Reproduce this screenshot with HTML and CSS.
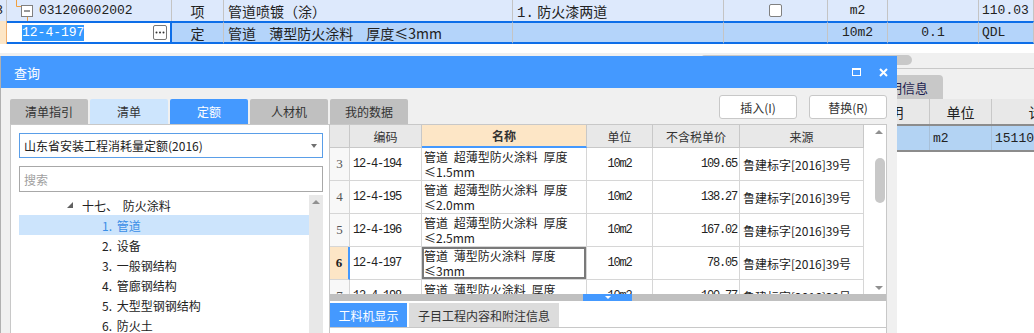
FILE: index.html
```html
<!DOCTYPE html>
<html lang="zh-CN">
<head>
    <meta charset="UTF-8">
    <meta name="viewport" content="width=device-width, initial-scale=1.0">
    <title>查询</title>
    <link rel="stylesheet" href="styles.css">
</head>
<body>
    <!-- 分部分项表格（对话框后面） -->
    <div class="sheet">
        <div class="sheet-row row-parent">
            <div class="cell c-num">3</div>
            <div class="cell c-code">
                <svg class="tree-line" width="26" height="21" viewBox="0 0 26 21">
                    <path d="M9.5 0V6.5H14.5" stroke="#f0a040" fill="none"/>
                    <path d="M20.5 16.5V21" stroke="#f0a040" fill="none"/>
                    <rect x="14.5" y="5.5" width="11" height="11" fill="#fff" stroke="#808080"/>
                    <path d="M17 11H23" stroke="#333"/>
                </svg>
                <span class="num">031206002002</span>
            </div>
            <div class="cell c-type">项</div>
            <div class="cell c-name">管道喷镀（涂）</div>
            <div class="cell c-feat">1. 防火漆两道</div>
            <div class="cell c-chk"><span class="chk"></span></div>
            <div class="cell c-unit num">m2</div>
            <div class="cell c-qty num"></div>
            <div class="cell c-val num">110.03</div>
        </div>
        <div class="sheet-row row-current">
            <div class="cell c-num"></div>
            <div class="cell c-code c-edit">
                <span class="sel num">12-4-197</span>
                <span class="more">
                    <svg width="12" height="13" viewBox="0 0 12 13">
                        <circle cx="2.5" cy="6.5" r="1" fill="#333"/>
                        <circle cx="6" cy="6.5" r="1" fill="#333"/>
                        <circle cx="9.5" cy="6.5" r="1" fill="#333"/>
                    </svg>
                </span>
            </div>
            <div class="cell c-type">定</div>
            <div class="cell c-name">管道 薄型防火涂料 厚度≤3mm</div>
            <div class="cell c-feat"></div>
            <div class="cell c-chk"></div>
            <div class="cell c-unit num">10m2</div>
            <div class="cell c-qty num">0.1</div>
            <div class="cell c-val num">QDL</div>
        </div>
    </div>

    <div class="hscroll"><div class="hthumb"></div></div>

    <div class="pane">
        <div class="pane-tabs"><div class="pane-tab">说明信息</div></div>
        <div class="pane-grid pane-head">
            <div>特征</div>
            <div>说明</div>
            <div>单位</div>
            <div>计算式</div>
            <div></div>
        </div>
        <div class="pane-grid pane-row">
            <div></div>
            <div></div>
            <div class="num">m2</div>
            <div class="num">15110.3</div>
            <div></div>
        </div>
    </div>

    <!-- 查询对话框 -->
    <div class="dialog">
        <div class="dlg-head">
            <span>查询</span>
            <div class="dlg-tools">
                <span class="ico-max"></span>
                <svg class="ico-close" width="9" height="9" viewBox="0 0 9 9">
                    <path d="M1 1L8 8M8 1L1 8" stroke="#fff" stroke-width="2"/>
                </svg>
            </div>
        </div>

        <div class="dlg-bar">
            <div class="tabs">
                <div class="tab">清单指引</div>
                <div class="tab light">清单</div>
                <div class="tab on">定额</div>
                <div class="tab">人材机</div>
                <div class="tab">我的数据</div>
            </div>
            <div class="actions">
                <button class="btn">插入(I)</button>
                <button class="btn">替换(R)</button>
            </div>
        </div>

        <div class="dlg-body">
            <div class="lib">
                <div class="combo">
                    <span>山东省安装工程消耗量定额(2016)</span>
                    <span class="caret"></span>
                </div>
                <input class="search" type="text" placeholder="搜索">
                <div class="tree">
                    <div class="tree-list">
                        <div class="node l0"><span class="expander"></span>十七、 防火涂料</div>
                        <div class="node l1 on">1. 管道</div>
                        <div class="node l1">2. 设备</div>
                        <div class="node l1">3. 一般钢结构</div>
                        <div class="node l1">4. 管廊钢结构</div>
                        <div class="node l1">5. 大型型钢钢结构</div>
                        <div class="node l1">6. 防火土</div>
                    </div>
                    <div class="tbar"><span class="arrow-up"></span></div>
                </div>
            </div>

            <div class="list">
                <div class="grid-wrap">
                    <div class="qgrid">
                        <div class="qh"></div>
                        <div class="qh">编码</div>
                        <div class="qh key">名称</div>
                        <div class="qh">单位</div>
                        <div class="qh">不含税单价</div>
                        <div class="qh">来源</div>

                        <div class="rn">3</div>
                        <div class="code num">12-4-194</div>
                        <div class="name"><span>管道 超薄型防火涂料 厚度<br>≤1.5mm</span></div>
                        <div class="unit num">10m2</div>
                        <div class="price num">109.65</div>
                        <div class="src">鲁建标字[2016]39号</div>

                        <div class="rn">4</div>
                        <div class="code num">12-4-195</div>
                        <div class="name"><span>管道 超薄型防火涂料 厚度<br>≤2.0mm</span></div>
                        <div class="unit num">10m2</div>
                        <div class="price num">138.27</div>
                        <div class="src">鲁建标字[2016]39号</div>

                        <div class="rn">5</div>
                        <div class="code num">12-4-196</div>
                        <div class="name"><span>管道 超薄型防火涂料 厚度<br>≤2.5mm</span></div>
                        <div class="unit num">10m2</div>
                        <div class="price num">167.02</div>
                        <div class="src">鲁建标字[2016]39号</div>

                        <div class="rn cur">6</div>
                        <div class="code num">12-4-197</div>
                        <div class="name cur"><span>管道 薄型防火涂料 厚度<br>≤3mm</span></div>
                        <div class="unit num">10m2</div>
                        <div class="price num">78.05</div>
                        <div class="src">鲁建标字[2016]39号</div>

                        <div class="rn">7</div>
                        <div class="code num">12-4-198</div>
                        <div class="name top"><span>管道 薄型防火涂料 厚度</span></div>
                        <div class="unit num">10m2</div>
                        <div class="price num">100.77</div>
                        <div class="src">鲁建标字[2016]39号</div>
                    </div>
                    <div class="vbar">
                        <span class="arrow-up"></span>
                        <span class="vthumb"></span>
                        <span class="arrow-down"></span>
                    </div>
                </div>

                <div class="split"><div class="split-handle"><span></span></div></div>

                <div class="subtabs">
                    <div class="subtab on">工料机显示</div>
                    <div class="subtab">子目工程内容和附注信息</div>
                </div>
            </div>
        </div>
    </div>
</body>
</html>
```

FILE: styles.css
```css
* {
    box-sizing: border-box;
}

html, body {
    margin: 0;
    height: 333px;
    overflow: hidden;
}

body {
    position: relative;
    background-color: #ffffff;
    font-family: "Noto Sans CJK SC", sans-serif;
    font-size: 12px;
    color: #222222;
}

.num {
    font-family: "Liberation Mono", "Noto Sans CJK SC", monospace;
}

/* Sheet behind the dialog */
.sheet-row {
    display: grid;
    grid-template-columns: 7px 165px 52px 289px 211px 104px 60px 91px 1fr;
    font-size: 14px;
}

.row-parent {
    height: 21px;
    background-color: #dde9fc;
}

.row-current {
    height: 23px;
    background-color: #b4d4fa;
}

.cell {
    display: flex;
    align-items: center;
    border-right: 1px solid #c4c4c4;
    white-space: nowrap;
    overflow: hidden;
}

.row-current .cell {
    border-top: 2px solid #0d6ee8;
    border-bottom: 2px solid #0d6ee8;
}

.row-current .c-num {
    border-top: 0;
    border-bottom: 0;
    background-color: #fde6c6;
    border-right-color: #f0b070;
}

.c-num {
    justify-content: flex-end;
    padding-right: 3px;
    font-family: "Liberation Mono", monospace;
    font-size: 13px;
}

.c-code .num {
    margin-left: 6px;
    font-size: 13px;
}

.tree-line {
    flex-shrink: 0;
}

.c-type {
    justify-content: center;
}

.c-name {
    padding-left: 4px;
    word-spacing: 10px;
}

.c-feat {
    padding-left: 4px;
    font-family: "Liberation Mono", "Noto Sans CJK SC", monospace;
    word-spacing: -5px;
}

.c-chk {
    justify-content: center;
}

.chk {
    width: 13px;
    height: 13px;
    border: 1px solid #808080;
    border-radius: 2px;
    background-color: #ffffff;
}

.c-unit, .c-qty {
    justify-content: center;
    font-size: 13px;
}

.c-val {
    padding-left: 3px;
    font-size: 13px;
}

.c-edit {
    background-color: #ffffff;
    border-right: 2px solid #0d6ee8 !important;
    padding-left: 9px;
}

.sel {
    background-color: #3399ff;
    color: #ffffff;
    font-size: 13px;
    line-height: 16px;
}

.more {
    margin-left: auto;
    margin-right: 3px;
    width: 14px;
    height: 15px;
    border: 1px solid #777777;
    border-radius: 2px;
    background-color: #ffffff;
    display: flex;
    align-items: center;
    justify-content: center;
}

.hscroll {
    margin-top: 9px;
    height: 15px;
    padding-top: 2px;
    background-color: #f0f0f0;
}

.hthumb {
    margin-left: 700px;
    width: 212px;
    height: 10px;
    border-radius: 5px;
    background-color: #c8c8c8;
}

.pane {
    border-top: 1px solid #c8c8c8;
    background-color: #f0f0f0;
}

.pane-tabs {
    height: 30px;
    padding-top: 6px;
}

.pane-tab {
    margin-left: 863px;
    width: 80px;
    height: 24px;
    padding-right: 15px;
    border-radius: 0 4px 0 0;
    background-color: #c8c8c8;
    color: #1e1e50;
    font-size: 13px;
    display: flex;
    align-items: center;
    justify-content: flex-end;
}

.pane-grid {
    display: grid;
    grid-template-columns: 850px 80px 62px 116px 1fr;
}

.pane-grid > div {
    display: flex;
    align-items: center;
    border-right: 1px solid #c8c8c8;
    white-space: nowrap;
    overflow: hidden;
}

.pane-head {
    height: 25px;
    background-color: #e8e8e8;
    font-size: 14px;
}

.pane-head > div {
    justify-content: center;
}

.pane-row {
    height: 28px;
    background-color: #b3d3f3;
    border-top: 2px solid #8c8c8c;
    border-bottom: 2px solid #8c8c8c;
    font-size: 13px;
}

.pane-row > div {
    padding-left: 3px;
    border-right-color: #a8c0d8;
}

/* Dialog */
.dialog {
    position: absolute;
    left: 0;
    top: 56px;
    width: 897px;
    height: 290px;
    background-color: #f0f0f0;
    border-left: 1px solid #b0b0b0;
    overflow: hidden;
}

.dlg-head {
    height: 32px;
    padding: 0 9px 0 13px;
    background-color: #4499ff;
    color: #ffffff;
    font-size: 13px;
    display: flex;
    align-items: center;
}

.dlg-tools {
    margin-left: auto;
    display: flex;
    align-items: center;
    gap: 18px;
}

.ico-max {
    width: 9px;
    height: 8px;
    border: 1px solid #ffffff;
    border-top-width: 2px;
}

.dlg-bar {
    height: 36px;
    padding: 0 10px 0 9px;
    display: flex;
    align-items: flex-end;
}

.tabs {
    display: flex;
    gap: 2px;
}

.tab {
    width: 78px;
    height: 25px;
    border-radius: 2px 2px 0 0;
    background-color: #c0c0c0;
    color: #333333;
    display: flex;
    align-items: center;
    justify-content: center;
}

.tab.light {
    background-color: #cde5fd;
}

.tab.on {
    background-color: #4499ff;
    color: #ffffff;
}

.actions {
    margin-left: auto;
    margin-top: 7px;
    align-self: flex-start;
    display: flex;
    gap: 12px;
}

.btn {
    width: 78px;
    height: 24px;
    border: 1px solid #c8c8c8;
    border-radius: 3px;
    background-color: #ffffff;
    font-family: inherit;
    font-size: 12px;
    color: #333333;
}

.dlg-body {
    display: flex;
    padding: 0 10px 0 9px;
    height: 222px;
}

.lib {
    width: 319px;
    padding: 8px 6px 0 8px;
    border: 1px solid #c8c8c8;
    border-right: 0;
    background-color: #ffffff;
}

.combo {
    height: 25px;
    padding: 0 5px 0 4px;
    border: 1px solid #5a9ee8;
    display: flex;
    align-items: center;
}

.caret {
    margin-left: auto;
    border-left: 3.5px solid transparent;
    border-right: 3.5px solid transparent;
    border-top: 4px solid #707070;
}

.search {
    display: block;
    margin-top: 8px;
    width: 100%;
    height: 26px;
    padding: 0 4px;
    border: 1px solid #a8a8a8;
    font-family: inherit;
    font-size: 12px;
    outline: none;
}

.search::placeholder {
    color: #a0a0a0;
}

.tree {
    margin-top: 3px;
    display: flex;
    height: 160px;
}

.tree-list {
    flex: 1;
}

.node {
    height: 20px;
    display: flex;
    align-items: center;
    word-spacing: 2px;
}

.node.l0 {
    padding-left: 48px;
}

.node.l1 {
    padding-left: 83px;
}

.node.on {
    background-color: #cce4fc;
    color: #3a8ee6;
}

.expander {
    width: 0;
    height: 0;
    margin-right: 9px;
    border-left: 6px solid transparent;
    border-bottom: 6px solid #606060;
}

.tbar {
    width: 14px;
    padding-top: 5px;
    background-color: #e8e8e8;
    display: flex;
    justify-content: center;
}

.arrow-up {
    width: 0;
    height: 0;
    border-left: 4px solid transparent;
    border-right: 4px solid transparent;
    border-bottom: 4px solid #909090;
}

.arrow-down {
    width: 0;
    height: 0;
    border-left: 4px solid transparent;
    border-right: 4px solid transparent;
    border-top: 4px solid #909090;
}

/* Result table */
.list {
    width: 558px;
    border: 1px solid #c8c8c8;
    background-color: #ffffff;
    display: flex;
    flex-direction: column;
}

.grid-wrap {
    height: 169px;
    display: flex;
    overflow: hidden;
}

.qgrid {
    display: grid;
    grid-template-columns: 20px 72px 165px 66px 87px 124px;
    grid-template-rows: 23px;
    grid-auto-rows: 33px;
    align-content: start;
}

.qgrid > div {
    display: flex;
    align-items: center;
    border-right: 1px solid #d6d6d6;
    border-bottom: 1px solid #d6d6d6;
    white-space: nowrap;
    overflow: hidden;
}

.qgrid .qh {
    justify-content: center;
    background-color: #e8e8e8;
    border-color: #c8c8c8;
    color: #333333;
}

.qgrid .qh.key {
    background-color: #fde6c6;
    font-weight: bold;
    border-bottom: 2px solid #4499ff;
}

.rn {
    justify-content: center;
    background-color: #f8f8f8;
    color: #555555;
    font-family: "Liberation Serif", serif;
    font-size: 13px;
}

.qgrid .rn.cur {
    background-color: #fde6c6;
    color: #222222;
    font-weight: bold;
    border-right: 2px solid #4499ff;
}

.code {
    padding-left: 3px;
    font-size: 12px;
    letter-spacing: -1.2px;
}

.name {
    padding-left: 2px;
    line-height: 15px;
    word-spacing: 3px;
}

.qgrid .name.top {
    align-items: flex-start;
    padding-top: 2px;
}

.name.cur {
    box-shadow: inset 0 0 0 2px #7a7a7a;
}

.unit {
    justify-content: center;
    font-size: 12px;
    letter-spacing: -1.2px;
}

.price {
    justify-content: flex-end;
    padding-right: 2px;
    font-size: 12px;
    letter-spacing: -1.2px;
}

.src {
    padding-left: 3px;
}

.vbar {
    flex: 1;
    display: flex;
    flex-direction: column;
    align-items: flex-end;
}

.vbar .arrow-up {
    margin-top: 5px;
    margin-right: 3px;
}

.vthumb {
    margin-top: 24px;
    margin-right: 1px;
    width: 10px;
    height: 45px;
    border-radius: 5px;
    background-color: #c8c8c8;
}

.vbar .arrow-down {
    margin-top: auto;
    margin-bottom: 4px;
    margin-right: 3px;
}

.split {
    height: 7px;
    background-color: #c0c0c0;
}

.split-handle {
    margin-left: 253px;
    width: 49px;
    height: 7px;
    background-color: #4499ff;
    display: flex;
    justify-content: center;
}

.split-handle span {
    margin-top: 2px;
    border-left: 3px solid transparent;
    border-right: 3px solid transparent;
    border-top: 3px solid #ffffff;
}

.subtabs {
    display: flex;
    gap: 2px;
    padding-top: 2px;
    border-bottom: 1px solid #c8c8c8;
}

.subtab {
    width: 150px;
    height: 24px;
    background-color: #dcdcdc;
    color: #333333;
    display: flex;
    align-items: center;
    justify-content: center;
}

.subtab.on {
    width: 77px;
    background-color: #4499ff;
    color: #ffffff;
}
```
